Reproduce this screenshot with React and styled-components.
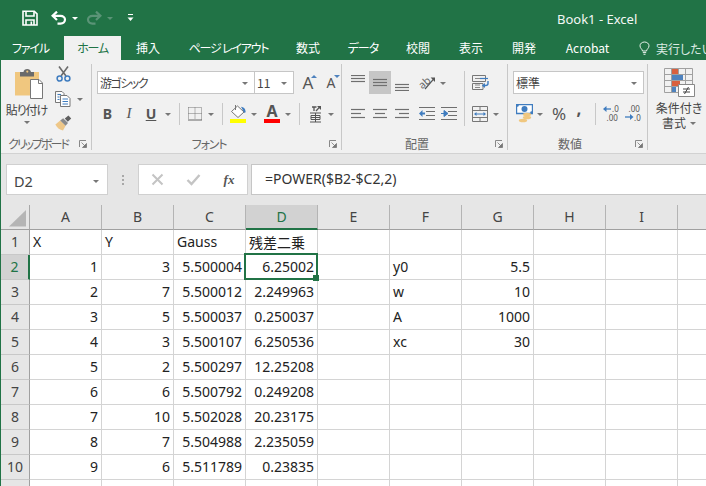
import React from "react";
import styled, { createGlobalStyle } from "styled-components";

const GREEN = "#217346";
const GLYPH = "#6f6f6f";
const UI = `"Noto Sans CJK JP", "Noto Sans", sans-serif`;

const Global = createGlobalStyle`
  html, body { margin: 0; padding: 0; background: #fff; }
  * { box-sizing: border-box; }
`;

const Window = styled.div`
  width: 706px; height: 486px; overflow: hidden; background: ${GREEN};
  font-family: ${UI}; font-feature-settings: "palt"; color: #444;
`;
const TitleBar = styled.div`
  height: 36px; display: flex; align-items: center; padding-left: 19px; color: #fff;
`;
const TitleText = styled.div`
  margin-left: 421px; margin-top: 2px; font: 13px/18px "Noto Sans", sans-serif; white-space: nowrap; color: #f4f8f6;
`;
const Tabs = styled.div`
  height: 24px; display: flex; align-items: stretch; overflow: hidden;
`;
const Tab = styled.div`
  width: ${(p) => p.$w}px; flex: none; text-align: ${(p) => (p.$first ? "left" : "center")};
  padding-left: ${(p) => (p.$first ? 12 : 0)}px; font-size: 12px; line-height: 23px; white-space: nowrap;
  letter-spacing: ${(p) => p.$ls ?? 0}px;
  color: ${(p) => (p.$active ? GREEN : "#fff")}; background: ${(p) => (p.$active ? "#f1f1f1" : "transparent")};
`;
const TellMe = styled.div`
  display: flex; align-items: center; gap: 6px; margin-left: 14px; color: #dcebe3; font-size: 12px; white-space: nowrap;
`;

const Lower = styled.div`
  border-left: 1px solid ${GREEN}; background: #e6e6e6; height: 426px;
`;
const Ribbon = styled.div`
  height: 94px; background: #f1f1f1; border-bottom: 1px solid #d2d2d2; display: flex; padding-top: 4px; overflow: hidden;
`;
const Group = styled.div`
  width: ${(p) => p.$w}px; flex: none; height: 86px; display: flex; flex-direction: column;
  border-right: ${(p) => (p.$open ? "none" : "1px solid #c8c8c8")};
  margin-right: ${(p) => (p.$open ? 0 : 1)}px;
`;
const Body = styled.div`
  flex: 1; min-height: 0; display: flex; padding: ${(p) => p.$pt ?? 7}px 0 0 ${(p) => p.$pl ?? 4}px;
`;
const CaptionRow = styled.div`
  height: 12px; display: flex; align-items: center;
`;
const Caption = styled.div`
  flex: 1; text-align: center; font-size: 12px; line-height: 12px; color: #666; white-space: nowrap;
  letter-spacing: ${(p) => p.$ls ?? 0}px;
`;
const Launcher = styled.div`
  width: 16px; height: 12px; display: flex; align-items: center; justify-content: center;
`;
const Stack = styled.div`
  display: flex; flex-direction: column; flex: none;
`;
const Row = styled.div`
  height: 23px; display: flex; align-items: center; margin-top: ${(p) => p.$mt ?? 0}px;
`;
const Slot = styled.div`
  width: ${(p) => p.$w}px; height: ${(p) => p.$h ?? 23}px; flex: none; display: flex; align-items: center; justify-content: center;
  margin-left: ${(p) => p.$ml ?? 0}px; margin-top: ${(p) => p.$mt ?? 0}px;
  background: ${(p) => (p.$on ? "#c6c6c6" : "transparent")}; position: relative;
`;
const Caret = styled.span`
  display: block; width: 0; height: 0; margin-top: ${(p) => p.$mt ?? 1}px;
  border-left: 3px solid transparent; border-right: 3px solid transparent; border-top: 3px solid ${(p) => p.$c ?? "#777"};
`;
const Sep = styled.div`
  width: 1px; height: ${(p) => p.$h ?? 22}px; background: #c8c8c8; flex: none; margin-left: ${(p) => p.$ml ?? 0}px;
`;
const Select = styled.div`
  width: ${(p) => p.$w}px; height: 23px; flex: none; margin-left: ${(p) => p.$ml ?? 0}px;
  display: flex; align-items: center; justify-content: space-between; padding: 0 6px 0 2px;
  background: #fff; border: 1px solid #c6c6c6; font-size: 12px; color: #444;
`;
const SelectText = styled.span`
  letter-spacing: ${(p) => p.$ls ?? 0}px; white-space: nowrap;
`;
const Paste = styled.div`
  width: 51px; flex: none; display: flex; flex-direction: column; align-items: center; padding-top: 4px;
`;
const PasteArt = styled.div`
  margin-left: 5px; height: 31px;
`;
const PasteLabel = styled.div`
  font-size: 12px; line-height: 14px; margin-top: 4px; color: #444; white-space: nowrap; letter-spacing: -1px;
`;
const Letter = styled.span`
  font: ${(p) => p.$weight ?? 400} ${(p) => p.$size ?? 14}px/1 ${(p) => p.$serif ? `"Liberation Serif", serif` : `"Noto Sans", sans-serif`};
  font-style: ${(p) => (p.$italic ? "italic" : "normal")};
  text-decoration: ${(p) => (p.$under ? "underline" : "none")}; color: #555;
`;
const TinyMark = styled.span`
  position: absolute; top: ${(p) => p.$t}px; right: ${(p) => p.$r}px; width: 0; height: 0;
  border-left: 3px solid transparent; border-right: 3px solid transparent;
  ${(p) => (p.$up ? "border-bottom: 3px solid #4e82be;" : "border-top: 3px solid #4e82be;")}
`;
const ColorBar = styled.span`
  position: absolute; left: 3px; right: 3px; bottom: 2px; height: 4px; background: ${(p) => p.$c};
`;
const Lifted = styled.span`
  position: relative; top: ${(p) => p.$t ?? -3}px; line-height: 1;
`;
const BigButton = styled.div`
  width: 58px; flex: none; display: flex; flex-direction: column; align-items: center; padding-top: 4px; margin-left: 1px;
`;
const BigLabel = styled.div`
  font-size: 12px; line-height: 15px; color: #444; white-space: nowrap; display: flex; align-items: center; gap: 4px; margin-top: ${(p) => p.$mt ?? 0}px;
`;
const NextButtonLabel = styled.div`
  margin-left: -2px; padding-top: 37px; font-size: 12px; line-height: 15px; color: #444; white-space: nowrap;
`;

const FormulaArea = styled.div`
  height: 51px; padding: 10px 0 10px 5px; display: flex;
`;
const NameBox = styled.div`
  width: 102px; flex: none; display: flex; align-items: center; justify-content: space-between; padding: 2px 8px 0 7px;
  background: #fff; border: 1px solid #d0d0d0; font: 14.5px "Noto Sans", sans-serif; color: #444;
`;
const Grip = styled.div`
  width: 30px; flex: none; display: flex; flex-direction: column; align-items: center; justify-content: center; gap: 2px;
  & > span { width: 2px; height: 2px; background: #a8a8a8; }
`;
const Tools = styled.div`
  width: 110px; flex: none; display: flex; align-items: center; background: #fff; border: 1px solid #d0d0d0;
`;
const FormulaInput = styled.div`
  flex: 1; margin-left: 3px; margin-right: -3px; padding: 0 0 2px 13px; display: flex; align-items: center;
  background: #fff; border: 1px solid #c6c6c6; font: 14px "Noto Sans", sans-serif; color: #333; white-space: nowrap;
`;

const Sheet = styled.div`
  display: grid; grid-template-columns: 29px repeat(10, 72px); grid-auto-rows: 25px; background: #fff; width: 749px;
`;
const Corner = styled.div`
  background: #e6e6e6; border-right: 1px solid #a8a8a8; border-bottom: 1px solid #a0a0a0; display: flex; padding: 5px 0 0 8px;
`;
const ColHead = styled.div`
  display: flex; align-items: center; justify-content: center; font: 14px "Noto Sans", sans-serif; padding-bottom: 1px;
  background: ${(p) => (p.$on ? "#d2d2d2" : "#e6e6e6")}; color: ${(p) => (p.$on ? GREEN : "#444")};
  border-right: 1px solid #b4b4b4; border-bottom: ${(p) => (p.$on ? `2px solid ${GREEN}` : "1px solid #a0a0a0")};
`;
const RowHead = styled.div`
  display: flex; align-items: center; justify-content: center; font: 14px "Noto Sans", sans-serif; padding-bottom: 1px;
  background: ${(p) => (p.$on ? "#d2d2d2" : "#e6e6e6")}; color: ${(p) => (p.$on ? GREEN : "#444")};
  border-right: ${(p) => (p.$on ? `2px solid ${GREEN}` : "1px solid #a0a0a0")}; border-bottom: 1px solid #c8c8c8;
`;
const Cell = styled.div`
  display: flex; align-items: center; justify-content: ${(p) => (p.$num ? "flex-end" : "flex-start")}; position: relative;
  padding: 0 3px 1px; border-right: 1px solid #d4d4d4; border-bottom: 1px solid #d4d4d4;
  font: 14px "Noto Sans", "Noto Sans CJK JP", sans-serif; color: #222; white-space: nowrap;
  ${(p) => p.$selected && `
    &::after { content: ""; position: absolute; left: -2px; top: -2px; right: -1px; bottom: -1px; border: 2px solid ${GREEN}; }
    &::before { content: ""; position: absolute; right: -2px; bottom: -2px; width: 6px; height: 6px; background: ${GREEN}; z-index: 1; }
  `}
`;

const Ic = ({ w, h, children, ...rest }) => (
  <svg width={w} height={h} viewBox={`0 0 ${w} ${h}`} {...rest}>{children}</svg>
);
const LINE = { stroke: GLYPH, strokeWidth: 1.2, fill: "none" };

const Lines = ({ rows, y = 0, gap = 4 }) => (
  <Ic w={16} h={16}>
    {rows.map(([a, b], i) => <path key={i} d={`M${a} ${y + i * gap + 0.5}H${b}`} {...LINE} />)}
  </Ic>
);

const SaveIcon = () => (
  <Ic w={16} h={16}>
    <path d="M1 1.2H12.3L15 3.8V15H1Z" fill="none" stroke="#fff" strokeWidth="1.6" />
    <path d="M4 1.2V6H12V1.2" fill="none" stroke="#fff" strokeWidth="1.6" />
    <path d="M4 15V10H12V15" fill="none" stroke="#fff" strokeWidth="1.6" />
    <path d="M9.3 11.5V15" stroke="#fff" strokeWidth="1.6" />
  </Ic>
);
const UndoIcon = ({ c = "#fff", flip }) => (
  <Ic w={16} h={14} style={flip ? { transform: "scaleX(-1)" } : undefined}>
    <path d="M2 4.8H9.5C12.2 4.8 14 6.6 14 8.6C14 10.8 12.2 12.6 9.5 12.6H6.5" fill="none" stroke={c} strokeWidth="2.2" />
    <path d="M6 0.6L1.6 4.8L6 9" fill="none" stroke={c} strokeWidth="2.2" />
  </Ic>
);
const CustomizeIcon = () => (
  <Ic w={7} h={8}>
    <path d="M1 0.5H6" stroke="#fff" strokeWidth="1" />
    <path d="M0.5 3.5H6.5L3.5 7Z" fill="#fff" />
  </Ic>
);
const Bulb = () => (
  <Ic w={11} h={14}>
    <path d="M3.5 10C3.3 8 1 7.4 1 4.8C1 2.6 3 1 5.5 1C8 1 10 2.6 10 4.8C10 7.4 7.7 8 7.5 10Z" fill="none" stroke="#eaf3ee" strokeWidth="1" />
    <path d="M3.8 11.6H7.2M4.5 13.3H6.5" stroke="#eaf3ee" strokeWidth="1" />
  </Ic>
);
const PasteIcon = () => (
  <Ic w={28} h={31}>
    <path d="M0 4H24V27.5H0Z" fill="#f0c77f" />
    <path d="M5 4H8.5C8.8 0 15.6 0 16 4H19V8.5H5Z" fill="#6b6b6b" />
    <circle cx="12.3" cy="3.6" r="1.1" fill="#f0c77f" />
    <path d="M15.5 11.5H24L27.5 15V30.5H15.5Z" fill="#fff" stroke="#777" strokeWidth="1" />
    <path d="M23.5 11.5V15.5H27.5" fill="none" stroke="#777" strokeWidth="1" />
  </Ic>
);
const ScissorsIcon = () => (
  <Ic w={15} h={16}>
    <path d="M3 0.5L10 10M12 0.5L5 10" stroke="#6b6b6b" strokeWidth="1.6" fill="none" />
    <circle cx="3.6" cy="12.6" r="2.5" fill="none" stroke="#3f7cbf" strokeWidth="1.5" />
    <circle cx="11.4" cy="12.6" r="2.5" fill="none" stroke="#3f7cbf" strokeWidth="1.5" />
  </Ic>
);
const CopyIcon = () => (
  <Ic w={16} h={16}>
    <path d="M0.5 0.5H7L9 2.5V4M5 11.5H0.5V0.5" fill="#fff" stroke="#777" />
    <path d="M5.5 4.5H12L15 7.5V15.5H5.5Z" fill="#fff" stroke="#777" />
    <path d="M2.5 3.5H6M2.5 6H4.5M2.5 8.5H4.5M7.5 8H13M7.5 10.5H13M7.5 13H13" stroke="#3f7cbf" strokeWidth="1" />
  </Ic>
);
const BrushIcon = () => (
  <Ic w={17} h={16}>
    <path d="M5.2 5.6L10.6 10.8L8 15.4C5 14.8 2 13 0.4 9.4Z" fill="#eec788" />
    <path d="M5.2 5.6L8.2 3.2L13 8L10.6 10.8Z" fill="#8a8a8a" />
    <path d="M9.8 3.6L13.4 0.4L16.2 3.4L12.8 6.8Z" fill="#5f5f5f" />
  </Ic>
);
const BorderIcon = () => (
  <Ic w={14} h={14}>
    <path d="M0.5 0.5H13.5V12.5M0.5 0.5V12.5M7 0.5V12.5M0.5 6.5H13.5" fill="none" stroke="#777" strokeDasharray="1 1" />
    <path d="M0 13H14" stroke="#666" strokeWidth="1" />
  </Ic>
);
const BucketIcon = () => (
  <Ic w={17} h={13}>
    <path d="M7.5 1L14 7L8 12.5L1.5 6.5Z" fill="#fff" stroke="#777" />
    <path d="M5.5 0V5" stroke="#777" />
    <path d="M11 1.8C13.5 2 15.4 3.6 15.6 6.6C15.6 8 14.3 8.3 13.8 7Z" fill="#3f7cbf" />
  </Ic>
);
const PhoneticGlyph = () => (
  <Ic w={13} h={18}>
    <path d="M7 6L11 1.6" stroke="#555" strokeWidth="1.3" />
    <path d="M8 1H12V5Z" fill="#555" />
    <path d="M3 2H7.5M5 2V6" stroke="#555" strokeWidth="1.3" fill="none" />
    <path d="M1 8H12M2 10.5H11V14.5H2ZM6.5 8V17M2 12.5H11M1 17H12" stroke="#555" strokeWidth="1" fill="none" />
  </Ic>
);
const OrientIcon = () => (
  <Ic w={17} h={15}>
    <text x="0" y="12" transform="rotate(-42 5 9)" fontFamily="Noto Sans, sans-serif" fontSize="10.5" fill="#666">ab</text>
    <path d="M6 14L15 3.6" stroke="#555" strokeWidth="1.2" />
    <path d="M11.6 2.6H16V7Z" fill="#555" />
  </Ic>
);
const WrapIcon = () => (
  <Ic w={17} h={16}>
    <path d="M0.5 0.5H13.5V6.5H0.5ZM0.5 8.5H11V14.5H0.5Z" fill="none" stroke="#777" />
    <path d="M3 3.5H9M3 10H8M3 12.5H8" stroke="#888" />
    <path d="M8 3.5H16" stroke="#3f7cbf" strokeWidth="1.2" />
    <path d="M16 6V8.5C16 10 15 10.5 13.5 10.5H10.5" fill="none" stroke="#3f7cbf" strokeWidth="1.4" />
    <path d="M13 8L10 10.5L13 13Z" fill="#3f7cbf" />
  </Ic>
);
const IndentIcon = ({ reverse }) => (
  <Ic w={16} h={14}>
    <path d="M0 0.5H16M7 4.5H16M7 8.5H16M0 12.5H16" stroke={GLYPH} strokeWidth="1.1" />
    {reverse
      ? <path d="M0 6.5H3V3.5L7 6.5L3 9.5V6.5" fill="#3f7cbf" stroke="#3f7cbf" />
      : <path d="M6 5.5H3.5V3L0 6.5L3.5 10V7.5H6Z" fill="#3f7cbf" />}
  </Ic>
);
const MergeIcon = () => (
  <Ic w={16} h={16}>
    <path d="M0.5 0.5H15.5V15.5H0.5ZM0.5 4.5H15.5M0.5 11.5H15.5M8 0.5V4.5M8 11.5V15.5" fill="none" stroke="#777" />
    <path d="M3 8H13" stroke="#3f7cbf" />
    <path d="M4.5 6L2 8L4.5 10ZM11.5 6L14 8L11.5 10Z" fill="#3f7cbf" />
  </Ic>
);
const AccountingIcon = () => (
  <Ic w={17} h={19}>
    <path d="M0.5 0.5H16.5V9.5H0.5Z" fill="#fff" stroke="#3f7cbf" strokeWidth="1.4" />
    <circle cx="8.5" cy="5" r="3" fill="#3f7cbf" />
    <circle cx="1.5" cy="1.5" r="1.2" fill="#3f7cbf" />
    <circle cx="15.5" cy="8.5" r="1.2" fill="#3f7cbf" />
    <ellipse cx="11" cy="10.5" rx="4.2" ry="1.8" fill="#f0c77f" />
    <ellipse cx="11" cy="13.5" rx="4.2" ry="1.8" fill="#f0c77f" />
    <ellipse cx="7" cy="16.5" rx="4.2" ry="1.8" fill="#f0c77f" />
  </Ic>
);
const DecimalIcon = ({ more }) => (
  <Ic w={17} h={17}>
    {more ? (
      <>
        <text x="3.5" y="6.5" fontFamily="Noto Sans, sans-serif" fontSize="8" fill="#555">.00</text>
        <text x="9" y="15.5" fontFamily="Noto Sans, sans-serif" fontSize="8" fill="#555">.0</text>
        <path d="M0 12H6.5" stroke="#3f7cbf" strokeWidth="1.3" />
        <path d="M5 9L8.5 12L5 15Z" fill="#3f7cbf" />
      </>
    ) : (
      <>
        <text x="9" y="6.5" fontFamily="Noto Sans, sans-serif" fontSize="8" fill="#555">.0</text>
        <text x="3.5" y="15.5" fontFamily="Noto Sans, sans-serif" fontSize="8" fill="#555">.00</text>
        <path d="M2 4H8" stroke="#3f7cbf" strokeWidth="1.3" />
        <path d="M3.5 1L0 4L3.5 7Z" fill="#3f7cbf" />
      </>
    )}
  </Ic>
);
const CondIcon = () => (
  <Ic w={31} h={29}>
    <path d="M0.5 0.5H28.5V24.5H0.5ZM0.5 6.5H28.5M0.5 12.5H28.5M0.5 18.5H28.5M7.5 0.5V24.5M14.5 0.5V24.5M21.5 0.5V24.5" fill="none" stroke="#a0a0a0" />
    <path d="M8 1H14V6H8Z" fill="#d9603e" />
    <path d="M8 7H19V12H8Z" fill="#4e82be" />
    <path d="M8 13H16V18H8Z" fill="#d9603e" />
    <path d="M8 19H12V24H8Z" fill="#4e82be" />
    <path d="M14.5 16.5H30.5V28.5H14.5Z" fill="#fff" stroke="#888" />
    <path d="M19 21H26M19 24H26M24.5 19L20.5 26" stroke="#444" strokeWidth="1" />
  </Ic>
);
const LauncherIcon = () => (
  <Ic w={8} h={8}>
    <path d="M0.5 7V0.5H7" fill="none" stroke="#888" />
    <path d="M2.5 2.5L6 6M7.5 3.5V7.5H3.5Z" stroke="#777" fill="#777" strokeWidth="0.8" />
  </Ic>
);
const CloseGlyph = () => (
  <Ic w={13} h={13}><path d="M1.5 1.5L11.5 11.5M11.5 1.5L1.5 11.5" stroke="#c4c4c4" strokeWidth="2" /></Ic>
);
const CheckGlyph = () => (
  <Ic w={15} h={13}><path d="M1.5 7L5.5 11L13.5 2" stroke="#c4c4c4" strokeWidth="2.4" fill="none" /></Ic>
);

const data = [
  ["X", "Y", "Gauss", "残差二乗", "", "", ""],
  [1, 3, "5.500004", "6.25002", "", "y0", "5.5"],
  [2, 7, "5.500012", "2.249963", "", "w", 10],
  [3, 5, "5.500037", "0.250037", "", "A", 1000],
  [4, 3, "5.500107", "6.250536", "", "xc", 30],
  [5, 2, "5.500297", "12.25208"],
  [6, 6, "5.500792", "0.249208"],
  [7, 10, "5.502028", "20.23175"],
  [8, 7, "5.504988", "2.235059"],
  [9, 6, "5.511789", "0.23835"],
  [],
];
const COLS = ["A", "B", "C", "D", "E", "F", "G", "H", "I", "J"];
const isNum = (v) => typeof v === "number" || /^[\d.]+$/.test(String(v ?? ""));

const tabs = [
  { t: "ファイル", w: 64, first: true, ls: -1.2 },
  { t: "ホーム", w: 57, active: true, ls: -1.2 },
  { t: "挿入", w: 54 },
  { t: "ページ レイアウト", w: 107, ls: -1.2 },
  { t: "数式", w: 52 },
  { t: "データ", w: 58, ls: -1 },
  { t: "校閲", w: 52 },
  { t: "表示", w: 54 },
  { t: "開発", w: 52 },
  { t: "Acrobat", w: 75 },
];

export default function App() {
  return (
    <Window>
      <Global />
      <TitleBar>
        <Slot $w={22}><SaveIcon /></Slot>
        <Slot $w={22} $ml={7}><UndoIcon /></Slot>
        <Slot $w={9}><Caret $c="#fff" /></Slot>
        <Slot $w={22} $ml={4}><UndoIcon c="#5b9477" flip /></Slot>
        <Slot $w={9}><Caret $c="#5b9477" /></Slot>
        <Slot $w={12} $ml={10}><CustomizeIcon /></Slot>
        <TitleText>Book1 - Excel</TitleText>
      </TitleBar>
      <Tabs>
        {tabs.map(({ t, w, first, active, ls }) => (
          <Tab key={t} $w={w} $first={first} $active={active} $ls={ls}>{t}</Tab>
        ))}
        <TellMe><Bulb />実行したいことを入力</TellMe>
      </Tabs>
      <Lower>
        <Ribbon>
          <Group $w={91}>
            <Body $pl={0} $pt={0}>
              <Paste>
                <PasteArt><PasteIcon /></PasteArt>
                <PasteLabel>貼り付け</PasteLabel>
                <Slot $w={10} $h={8} $mt={1}><Caret /></Slot>
              </Paste>
              <Stack>
                <Slot $w={22} $h={15} $mt={2}><ScissorsIcon /></Slot>
                <Row $mt={6}>
                  <Slot $w={22}><CopyIcon /></Slot>
                  <Slot $w={12}><Caret /></Slot>
                </Row>
                <Slot $w={22} $h={15} $mt={5}><BrushIcon /></Slot>
              </Stack>
            </Body>
            <CaptionRow><Caption $ls={-2}>クリップボード</Caption><Launcher><LauncherIcon /></Launcher></CaptionRow>
          </Group>

          <Group $w={249}>
            <Body>
              <Stack>
                <Row>
                  <Select $w={158}><SelectText $ls={-1.5}>游ゴシック</SelectText><Caret /></Select>
                  <Select $w={40} $ml={-1}><SelectText>11</SelectText><Caret /></Select>
                  <Slot $w={22} $ml={3}><Letter $size={17}>A</Letter><TinyMark $up $t={4} $r={2} /></Slot>
                  <Slot $w={22} $ml={1}><Letter $size={14}>A</Letter><TinyMark $t={4} $r={2} /></Slot>
                </Row>
                <Row $mt={8}>
                  <Slot $w={21}><Letter $weight={700} $size={14}>B</Letter></Slot>
                  <Slot $w={22}><Letter $serif $italic $size={15}>I</Letter></Slot>
                  <Slot $w={22}><Letter $weight={700} $size={14} $under>U</Letter></Slot>
                  <Slot $w={12}><Caret /></Slot>
                  <Sep $ml={5} />
                  <Slot $w={21} $ml={4}><BorderIcon /></Slot>
                  <Slot $w={12}><Caret /></Slot>
                  <Sep $ml={5} />
                  <Slot $w={22} $ml={4}>
                    <Lifted><BucketIcon /></Lifted>
                    <ColorBar $c="#ffff00" />
                  </Slot>
                  <Slot $w={10}><Caret /></Slot>
                  <Slot $w={22} $ml={2}>
                    <Lifted><Letter $size={16} $weight={700}>A</Letter></Lifted>
                    <ColorBar $c="#ff0000" />
                  </Slot>
                  <Slot $w={10}><Caret /></Slot>
                  <Sep $ml={6} />
                  <Slot $w={22} $ml={4}><PhoneticGlyph /></Slot>
                  <Slot $w={10}><Caret /></Slot>
                </Row>
              </Stack>
            </Body>
            <CaptionRow><Caption $ls={-1.2}>フォント</Caption><Launcher><LauncherIcon /></Launcher></CaptionRow>
          </Group>

          <Group $w={165}>
            <Body>
              <Stack>
                <Row>
                  <Slot $w={22}><Lines rows={[[1, 15], [1, 15], [1, 15]]} y={0} gap={3} /></Slot>
                  <Slot $w={22} $on><Lines rows={[[1, 15], [1, 15], [1, 15]]} y={4} gap={3} /></Slot>
                  <Slot $w={22}><Lines rows={[[1, 15], [1, 15], [1, 15]]} y={9} gap={3} /></Slot>
                  <Slot $w={22} $ml={3}><OrientIcon /></Slot>
                  <Slot $w={10}><Caret /></Slot>
                </Row>
                <Row $mt={8}>
                  <Slot $w={22}><Lines rows={[[1, 15], [1, 11], [1, 15]]} y={3} /></Slot>
                  <Slot $w={22}><Lines rows={[[1, 15], [3, 13], [1, 15]]} y={3} /></Slot>
                  <Slot $w={22}><Lines rows={[[1, 15], [5, 15], [1, 15]]} y={3} /></Slot>
                  <Slot $w={22} $ml={3}><IndentIcon /></Slot>
                  <Slot $w={22}><IndentIcon reverse /></Slot>
                </Row>
              </Stack>
              <Sep $ml={4} $h={55} />
              <Stack>
                <Row><Slot $w={22} $ml={4}><WrapIcon /></Slot></Row>
                <Row $mt={8}>
                  <Slot $w={22} $ml={4}><MergeIcon /></Slot>
                  <Slot $w={10}><Caret /></Slot>
                </Row>
              </Stack>
            </Body>
            <CaptionRow><Caption>配置</Caption><Launcher><LauncherIcon /></Launcher></CaptionRow>
          </Group>

          <Group $w={139}>
            <Body>
              <Stack>
                <Row><Select $w={131}><SelectText>標準</SelectText><Caret /></Select></Row>
                <Row $mt={8}>
                  <Slot $w={22}><AccountingIcon /></Slot>
                  <Slot $w={10}><Caret /></Slot>
                  <Slot $w={22} $ml={3}><Letter $size={17}>%</Letter></Slot>
                  <Slot $w={18}><Lifted $t={-5}><Letter $size={17} $weight={700}>,</Letter></Lifted></Slot>
                  <Sep $ml={7} />
                  <Slot $w={22} $ml={4}><DecimalIcon /></Slot>
                  <Slot $w={22}><DecimalIcon more /></Slot>
                </Row>
              </Stack>
            </Body>
            <CaptionRow><Caption>数値</Caption><Launcher><LauncherIcon /></Launcher></CaptionRow>
          </Group>

          <Group $w={120} $open>
            <Body $pl={0} $pt={0}>
              <BigButton>
                <CondIcon />
                <BigLabel $mt={3}>条件付き</BigLabel>
                <BigLabel>書式<Caret /></BigLabel>
              </BigButton>
              <NextButtonLabel>テーブルとして</NextButtonLabel>
            </Body>
          </Group>
        </Ribbon>

        <FormulaArea>
          <NameBox>D2<Caret /></NameBox>
          <Grip><span /><span /><span /></Grip>
          <Tools>
            <Slot $w={22} $ml={7} $h={28}><CloseGlyph /></Slot>
            <Slot $w={22} $ml={14} $h={28}><CheckGlyph /></Slot>
            <Slot $w={22} $ml={14} $h={28}><Letter $serif $italic $weight={700} $size={13}>fx</Letter></Slot>
          </Tools>
          <FormulaInput>=POWER($B2-$C2,2)</FormulaInput>
        </FormulaArea>

        <Sheet>
          <Corner>
            <Ic w={18} h={17}><path d="M17 0V16.5H0Z" fill="#b5b5b5" /></Ic>
          </Corner>
          {COLS.map((c) => <ColHead key={c} $on={c === "D"}>{c}</ColHead>)}
          {data.map((row, r) => (
            <React.Fragment key={r}>
              <RowHead $on={r === 1}>{r + 1}</RowHead>
              {COLS.map((c, i) => {
                const v = row[i];
                return (
                  <Cell key={c} $num={isNum(v)} $selected={r === 1 && c === "D"}>{v}</Cell>
                );
              })}
            </React.Fragment>
          ))}
        </Sheet>
      </Lower>
    </Window>
  );
}
